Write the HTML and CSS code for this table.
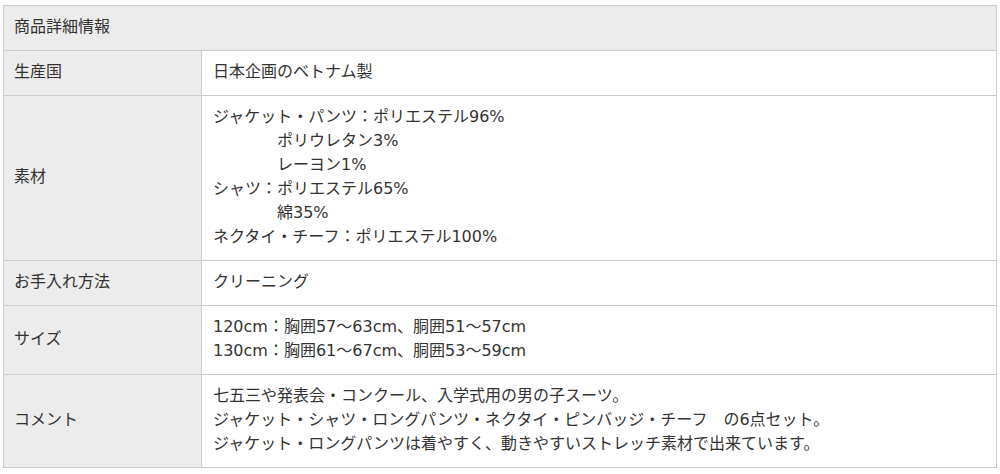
FILE: index.html
```html
<!DOCTYPE html>
<html lang="ja">
<head>
<meta charset="utf-8">
<link rel="stylesheet" href="styles.css">
</head>
<body>
<table class="spec">
  <tr><th class="head" colspan="2">商品詳細情報</th></tr>
  <tr><th class="label">生産国</th><td class="value">日本企画のベトナム製</td></tr>
  <tr><th class="label">素材</th><td class="value">ジャケット・パンツ：ポリエステル96%<br>　　　　ポリウレタン3%<br>　　　　レーヨン1%<br>シャツ：ポリエステル65%<br>　　　　綿35%<br>ネクタイ・チーフ：ポリエステル100%</td></tr>
  <tr><th class="label">お手入れ方法</th><td class="value">クリーニング</td></tr>
  <tr><th class="label">サイズ</th><td class="value">120cm：胸囲57～63cm、胴囲51～57cm<br>130cm：胸囲61～67cm、胴囲53～59cm</td></tr>
  <tr><th class="label">コメント</th><td class="value">七五三や発表会・コンクール、入学式用の男の子スーツ。<br>ジャケット・シャツ・ロングパンツ・ネクタイ・ピンバッジ・チーフ　の6点セット。<br>ジャケット・ロングパンツは着やすく、動きやすいストレッチ素材で出来ています。</td></tr>
</table>
</body>
</html>
```
FILE: styles.css
```css
html, body {
  margin: 0;
  padding: 0;
  background: #fff;
}
body {
  padding: 5px 3px 0 3px;
  font-family: "DejaVu Sans", "Noto Sans CJK JP", sans-serif;
  font-size: 16px;
  color: #333;
}
.spec {
  width: 994px;
  border-collapse: collapse;
  border: 1px solid #ccc;
}
.spec th, .spec td {
  border: 1px solid #ccc;
  line-height: 24px;
  font-weight: normal;
  text-align: left;
  vertical-align: middle;
}
.head {
  background: #ececec;
  padding: 9px 10px 11px 10px;
}
.label {
  background: #ececec;
  width: 177px;
  padding: 9px 10px 11px 10px;
}
.value {
  background: #fff;
  padding: 9px 11px 11px 11px;
}
```
